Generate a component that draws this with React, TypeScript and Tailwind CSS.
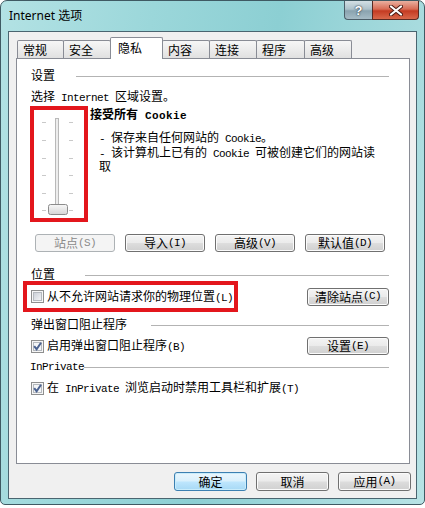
import React from 'react';

// latin runs inside the dialog body use a half-width mono face, like SimSun
function M({ children, className = '' }: { children: React.ReactNode; className?: string }) {
  return (
    <span className={`font-['Liberation_Mono',monospace] text-[11px] tracking-[-0.6px] whitespace-pre ${className}`}>
      {children}
    </span>
  );
}

function Check({ checked = false }: { checked?: boolean }) {
  return (
    <svg width="13" height="13" viewBox="0 0 13 13" className="shrink-0">
      <defs>
        <linearGradient id="cbIn" x1="0" y1="0" x2="1" y2="1">
          <stop offset="0" stopColor="#c9ced6" />
          <stop offset="1" stopColor="#f5f6f7" />
        </linearGradient>
      </defs>
      <rect x="0.5" y="0.5" width="12" height="12" fill="#f6f6f6" stroke="#8e8f8f" />
      <rect x="2.5" y="2.5" width="8" height="8" fill={checked ? '#f4f6f8' : 'url(#cbIn)'} stroke="#b5b9be" />
      {checked && <path d="M3.2 6.2 L5.6 9.2 L10 2.8" fill="none" stroke="#4c6391" strokeWidth="2" />}
    </svg>
  );
}

function Btn({
  children,
  className = '',
  disabled = false,
  primary = false,
}: {
  children: React.ReactNode;
  className?: string;
  disabled?: boolean;
  primary?: boolean;
}) {
  let look =
    'border-[#707070] text-black bg-[linear-gradient(180deg,#f4f4f4_0%,#ebebeb_48%,#dddddd_52%,#d0d0d0_100%)] shadow-[inset_0_0_0_1px_#fbfbfb]';
  if (disabled) look = 'border-[#adb2b5] text-[#8a8a8a] bg-[#f4f4f4]';
  if (primary)
    look =
      'border-[#3c7fb1] text-black bg-[linear-gradient(180deg,#eaf6fd_0%,#d9f0fc_48%,#bee6fd_52%,#a7d9f5_100%)] shadow-[inset_0_0_0_1px_#c9ecfb]';
  return (
    <div className={`flex items-center justify-center rounded-[3px] border text-[12px] leading-none ${look} ${className}`}>
      {children}
    </div>
  );
}

function Group({ label, lineMl, className = '' }: { label: React.ReactNode; lineMl: string; className?: string }) {
  return (
    <div className={`flex items-center h-[14px] leading-[14px] mr-[20px] ${className}`}>
      <span className="whitespace-nowrap">{label}</span>
      <div className={`flex-1 h-px bg-[#b3b3b3] mt-[3px] ${lineMl}`} />
    </div>
  );
}

function Slider() {
  const ticks = [12.5, 30.5, 48.5, 65.5, 83.5, 100.5];
  return (
    <svg width="50" height="108" viewBox="0 0 50 108">
      <defs>
        <linearGradient id="thumb" x1="0" y1="0" x2="0" y2="1">
          <stop offset="0" stopColor="#f8f8f8" />
          <stop offset="1" stopColor="#d6d6d6" />
        </linearGradient>
      </defs>
      {ticks.map((y) => (
        <g key={y} stroke="#c9c9c9">
          <line x1="8" y1={y} x2="12" y2={y} />
          <line x1="35" y1={y} x2="39" y2={y} />
        </g>
      ))}
      <rect x="21.5" y="8.5" width="3" height="96" fill="#ededed" stroke="#b9b9b9" />
      <rect x="14.5" y="94.5" width="19" height="10" rx="2" fill="url(#thumb)" stroke="#8c8c8c" />
    </svg>
  );
}

const tabs = [
  { label: '常规', w: 'w-[47px]' },
  { label: '安全', w: 'w-[48px]' },
  { label: '隐私', w: 'w-[53px]', active: true },
  { label: '内容', w: 'w-[48px]' },
  { label: '连接', w: 'w-[48px]' },
  { label: '程序', w: 'w-[49px]' },
  { label: '高级', w: 'w-[48px]' },
];

export default function App() {
  return (
    <div className="w-[425px] h-[508px] bg-white text-black font-['Noto_Sans_CJK_SC',sans-serif]">
      <div className="w-[425px] h-[505px] flex flex-col rounded-t-[7px] rounded-b-[5px] border border-[#3f5a63] bg-[linear-gradient(100deg,#b3e2e4_0%,#9bd7da_30%,#8ccfd3_55%,#a5dadd_80%,#b7e3e5_100%)]">
        {/* Title bar */}
        <div className="h-[30px] flex shrink-0">
          <div className="pl-[8px] pt-[7px] text-[12px] leading-[16px] font-['Noto_Sans','Noto_Sans_CJK_SC',sans-serif]">
            Internet 选项
          </div>
          <div className="ml-auto mr-[5px] flex h-[19px]">
            <div className="w-[28px] h-[19px] flex items-center justify-center border border-r-0 border-t-0 border-[#4b5e68] rounded-bl-[4px] bg-[linear-gradient(180deg,#d3dfe4_0%,#adc1ca_45%,#8aa3af_55%,#a6bcc6_100%)] text-white text-[13px] font-bold leading-none font-['Liberation_Sans',sans-serif] [text-shadow:0_0_2px_#2a3a44,0_0_1px_#2a3a44]">
              ?
            </div>
            <div className="w-[47px] h-[19px] flex items-center justify-center border border-t-0 border-[#5a2a22] rounded-br-[4px] bg-[linear-gradient(180deg,#eab0a0_0%,#d86c55_45%,#c43b22_55%,#d9684b_100%)]">
              <svg width="14" height="11" viewBox="0 0 14 11">
                <path d="M2 1.5 L12 9.5 M12 1.5 L2 9.5" stroke="#4a1a12" strokeWidth="4" strokeLinecap="round" />
                <path d="M2 1.5 L12 9.5 M12 1.5 L2 9.5" stroke="#ffffff" strokeWidth="2.2" strokeLinecap="round" />
              </svg>
            </div>
          </div>
        </div>

        {/* Client area */}
        <div className="mx-[7px] h-[468px] border border-[#4a6570] bg-[#f0f0f0] flex flex-col text-[12px]">
          {/* Tabs */}
          <div className="mt-[5px] ml-[8px] h-[21px] flex items-end">
            {tabs.map((t, i) =>
              t.active ? (
                <div
                  key={t.label}
                  className={`${t.w} h-[22px] -mb-px -ml-px relative z-10 border border-b-0 border-[#898c95] rounded-t-[2px] bg-white pl-[7px] pt-[2px] leading-[16px]`}
                >
                  {t.label}
                </div>
              ) : (
                <div
                  key={t.label}
                  className={`${t.w} h-[18px] ${i > 0 ? '-ml-px' : ''} border border-b-0 border-[#898c95] rounded-t-[2px] bg-[linear-gradient(180deg,#f6f6f6_0%,#ececec_50%,#e0e0e0_100%)] pl-[5px] pt-[1px] leading-[16px]`}
                >
                  {t.label}
                </div>
              )
            )}
          </div>

          {/* Panel */}
          <div className="ml-[7px] mr-[6px] h-[406px] border border-[#898c95] bg-white flex flex-col pt-[9px]">
            <Group label="设置" lineMl="ml-[21px]" className="pl-[14px]" />
            <div className="mt-[7px] pl-[14px] h-[14px] leading-[14px]">
              选择<M> Internet </M>区域设置。
            </div>

            <div className="mt-[3px] flex">
              <div className="ml-[13px] w-[58px] h-[116px] border-[4px] border-[#e3161c]">
                <Slider />
              </div>
              <div className="ml-[2px] pt-[1px]">
                <div className="font-bold h-[14px] leading-[14px]">
                  接受所有<M className="font-bold tracking-[0.4px]"> Cookie</M>
                </div>
                <div className="mt-[10px] ml-[9px] leading-[12.5px]">
                  <div>
                    <M>- </M>保存来自任何网站的<M> Cookie</M>。
                  </div>
                  <div>
                    <M>- </M>该计算机上已有的<M> Cookie </M>可被创建它们的网站读
                  </div>
                  <div>取</div>
                </div>
              </div>
            </div>

            <div className="mt-[12px] ml-[18px] flex gap-[10px]">
              <Btn disabled className="w-[80px] h-[18px]">
                站点<M>(S)</M>
              </Btn>
              <Btn className="w-[80px] h-[18px]">
                导入<M>(I)</M>
              </Btn>
              <Btn className="w-[80px] h-[18px]">
                高级<M>(V)</M>
              </Btn>
              <Btn className="w-[80px] h-[18px]">
                默认值<M>(D)</M>
              </Btn>
            </div>

            <Group label="位置" lineMl="ml-[30px]" className="mt-[15px] pl-[14px]" />
            <div className="flex items-center">
              <div className="ml-[6px] w-[215px] h-[31px] border-[4px] border-[#e3161c] flex items-center pl-[4px]">
                <Check />
                <span className="ml-[3px] whitespace-nowrap leading-[14px]">
                  从不允许网站请求你的物理位置<M>(L)</M>
                </span>
              </div>
              <Btn className="ml-auto mr-[20px] w-[82px] h-[18px]">
                清除站点<M>(C)</M>
              </Btn>
            </div>

            <Group label="弹出窗口阻止程序" lineMl="ml-[24px]" className="mt-[5px] pl-[14px]" />
            <div className="mt-[6px] h-[18px] flex items-center pl-[14px]">
              <Check checked />
              <span className="ml-[3px] leading-[14px]">
                启用弹出窗口阻止程序<M>(B)</M>
              </span>
              <Btn className="ml-auto mr-[20px] w-[82px] h-[18px]">
                设置<M>(E)</M>
              </Btn>
            </div>

            <Group label={<M>InPrivate</M>} lineMl="ml-0" className="mt-[4px] pl-[13px]" />
            <div className="mt-[8px] h-[14px] flex items-center pl-[14px]">
              <Check checked />
              <span className="ml-[3px] leading-[14px] whitespace-nowrap">
                在<M> InPrivate </M>浏览启动时禁用工具栏和扩展<M>(T)</M>
              </span>
            </div>
          </div>

          {/* Dialog buttons */}
          <div className="mt-[8px] mr-[5px] flex justify-end gap-[9px]">
            <Btn primary className="w-[73px] h-[19px]">
              确定
            </Btn>
            <Btn className="w-[73px] h-[19px]">取消</Btn>
            <Btn className="w-[73px] h-[19px]">
              应用<M>(A)</M>
            </Btn>
          </div>
        </div>
      </div>
    </div>
  );
}
